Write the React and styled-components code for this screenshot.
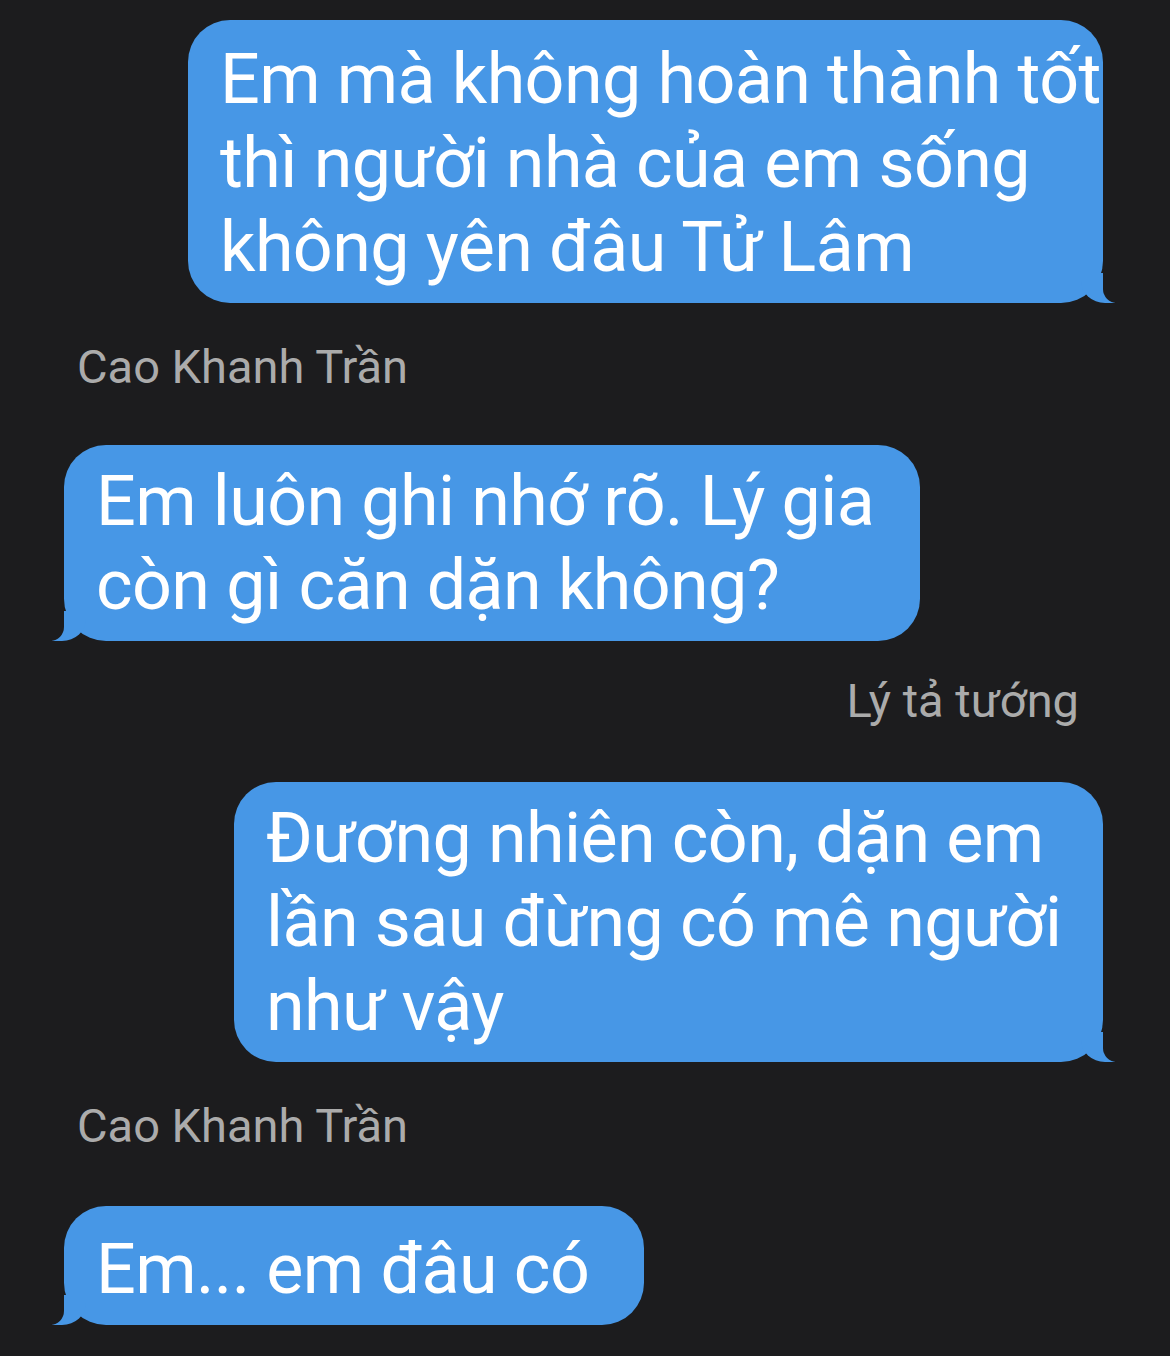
import styled, { createGlobalStyle } from 'styled-components';

const GlobalStyle = createGlobalStyle`
  html, body {
    margin: 0;
    padding: 0;
    background: #1c1c1e;
  }
  body {
    font-family: Roboto, Inter, "Liberation Sans", sans-serif;
    -webkit-font-smoothing: antialiased;
  }
`;

const BLUE = '#4797e6';
const BG = '#1c1c1e';

const Thread = styled.div`
  width: 1170px;
  min-height: 1356px;
  box-sizing: border-box;
  padding: 20px 67px 0 64px;
  display: flex;
  flex-direction: column;
  background: ${BG};
  overflow: hidden;
`;

const Bubble = styled.div`
  position: relative;
  box-sizing: border-box;
  width: ${({ $width }) => $width}px;
  align-self: ${({ $me }) => ($me ? 'flex-end' : 'flex-start')};
  margin-top: ${({ $top }) => $top || 0}px;
  padding: ${({ $padTop }) => $padTop || 14}px 0 14px 32px;
  background: ${BLUE};
  border-radius: 42px;
  color: #ffffff;
  font-size: 70px;
  line-height: 84px;
  letter-spacing: -0.6px;
  white-space: nowrap;

  &::before {
    content: '';
    position: absolute;
    bottom: 0;
    ${({ $me }) => ($me ? 'right: -12px;' : 'left: -12px;')}
    width: 34px;
    height: 30px;
    background: ${BLUE};
    ${({ $me }) =>
      $me
        ? 'border-bottom-left-radius: 24px 22px;'
        : 'border-bottom-right-radius: 24px 22px;'}
  }

  &::after {
    content: '';
    position: absolute;
    bottom: 0;
    ${({ $me }) => ($me ? 'right: -22px;' : 'left: -22px;')}
    width: 22px;
    height: 30px;
    background: ${BG};
    ${({ $me }) =>
      $me
        ? 'border-bottom-left-radius: 14px;'
        : 'border-bottom-right-radius: 14px;'}
  }
`;

const Line = styled.span`
  display: block;
`;

const Sender = styled.div`
  align-self: ${({ $me }) => ($me ? 'flex-end' : 'flex-start')};
  margin-top: ${({ $top }) => $top}px;
  padding: ${({ $me }) => ($me ? '0 24px 0 0' : '0 0 0 13px')};
  color: #ababab;
  font-size: 47px;
  line-height: 54px;
`;

const messages = [
  {
    me: true,
    width: 915,
    padTop: 17,
    lines: ['Em mà không hoàn thành tốt', 'thì người nhà của em sống', 'không yên đâu Tử Lâm'],
  },
  { sender: 'Cao Khanh Trần', top: 37 },
  {
    me: false,
    width: 856,
    top: 51,
    lines: ['Em luôn ghi nhớ rõ. Lý gia', 'còn gì căn dặn không?'],
  },
  { sender: 'Lý tả tướng', me: true, top: 33 },
  {
    me: true,
    width: 869,
    top: 54,
    lines: ['Đương nhiên còn, dặn em', 'lần sau đừng có mê người', 'như vậy'],
  },
  { sender: 'Cao Khanh Trần', top: 37 },
  { me: false, width: 580, top: 53, padTop: 21, lines: ['Em... em đâu có'] },
];

function App() {
  return (
    <>
      <GlobalStyle />
      <Thread>
        {messages.map((m, i) =>
          m.sender ? (
            <Sender key={i} $me={m.me} $top={m.top}>
              {m.sender}
            </Sender>
          ) : (
            <Bubble key={i} $me={m.me} $width={m.width} $top={m.top} $padTop={m.padTop}>
              {m.lines.map((l) => (
                <Line key={l}>{l}</Line>
              ))}
            </Bubble>
          )
        )}
      </Thread>
    </>
  );
}

export default App;
